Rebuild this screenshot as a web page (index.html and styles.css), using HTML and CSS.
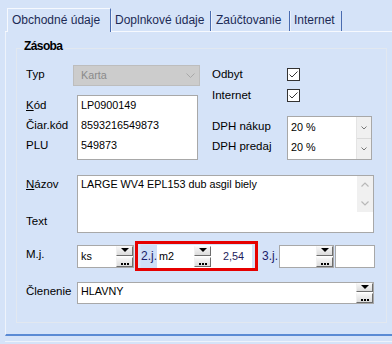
FILE: index.html
```html
<!DOCTYPE html>
<html lang="sk">
<head>
<meta charset="utf-8">
<link rel="stylesheet" href="styles.css">
</head>
<body>
<div class="tabs">
  <div class="tab tab-1 active">Obchodné údaje</div>
  <div class="tab tab-2">Doplnkové údaje</div>
  <div class="tab tab-3">Zaúčtovanie</div>
  <div class="tab tab-4">Internet</div>
</div>
<div class="panel">
  <fieldset class="group">
    <legend>Zásoba</legend>
    <div class="top">
      <div class="col-l">
        <div class="typ-row">
          <span class="lbl typ-lbl">Typ</span>
          <div class="sel-dis"><span>Karta</span><svg class="chev-dis" width="9" height="5" viewBox="0 0 9 5"><polyline points="0.5,0.5 4.5,4.5 8.5,0.5"/></svg></div>
        </div>
        <div class="codes">
          <div class="lbl code-lbls"><div><u>K</u>ód</div><div>Čiar.kód</div><div>PLU</div></div>
          <div class="field code-box"><div class="code-lines"><div>LP0900149</div><div>8593216549873</div><div>549873</div></div></div>
        </div>
      </div>
      <div class="col-r">
        <div class="chk-row r1"><span class="lbl chk-lbl">Odbyt</span><span class="chk"><svg width="11" height="11" viewBox="0 0 11 11"><polyline points="1.5,5.5 4,8 9.5,2.5"/></svg></span></div>
        <div class="chk-row r2"><span class="lbl chk-lbl">Internet</span><span class="chk"><svg width="11" height="11" viewBox="0 0 11 11"><polyline points="1.5,5.5 4,8 9.5,2.5"/></svg></span></div>
        <div class="dph">
          <div class="lbl dph-lbls"><div>DPH nákup</div><div>DPH predaj</div></div>
          <div class="field dph-combo">
            <div class="dph-vals"><div>20 %</div><div>20 %</div></div>
            <div class="dph-btns">
              <div class="dbtn"><svg width="6" height="4" viewBox="0 0 6 4"><polyline points="0.5,0.5 3,3 5.5,0.5"/></svg></div>
              <div class="dbtn dbtn-2"><svg width="6" height="4" viewBox="0 0 6 4"><polyline points="0.5,0.5 3,3 5.5,0.5"/></svg></div>
            </div>
          </div>
        </div>
      </div>
    </div>
    <div class="name-row">
      <div class="lbl name-lbls"><div><u>N</u>ázov</div><div class="text-lbl">Text</div></div>
      <div class="field name-box">
        <div class="name-text">LARGE WV4 EPL153 dub asgil biely</div>
        <div class="scroll"><svg width="16" height="36" viewBox="0 0 16 36"><polyline points="4.5,10.5 8,7 11.5,10.5"/><polyline points="4.5,25.5 8,29 11.5,25.5"/></svg></div>
      </div>
    </div>
    <div class="mj-row">
      <span class="lbl mj-lbl">M.j.</span>
      <div class="field cb cb-ks">
        <span class="cb-text">ks</span>
        <div class="stack">
          <div class="btn btn-drop"><svg width="8" height="4" viewBox="0 0 8 4"><polygon points="0,0 8,0 4,4"/></svg></div>
          <div class="btn btn-dots"><svg width="8" height="2" viewBox="0 0 8 2"><rect x="0" y="0" width="2" height="2"/><rect x="3" y="0" width="2" height="2"/><rect x="6" y="0" width="2" height="2"/></svg></div>
        </div>
      </div>
      <div class="mark">
        <span class="jlbl">2.j.</span>
        <div class="cb cb-m2">
          <span class="cb-text">m2</span>
          <div class="stack">
            <div class="btn btn-drop"><svg width="8" height="4" viewBox="0 0 8 4"><polygon points="0,0 8,0 4,4"/></svg></div>
            <div class="btn btn-dots"><svg width="8" height="2" viewBox="0 0 8 2"><rect x="0" y="0" width="2" height="2"/><rect x="3" y="0" width="2" height="2"/><rect x="6" y="0" width="2" height="2"/></svg></div>
          </div>
        </div>
        <span class="val val-2">2,54</span>
      </div>
      <span class="jlbl jlbl-3">3.j.</span>
      <div class="field cb cb-3">
        <span class="cb-text"></span>
        <div class="stack">
          <div class="btn btn-drop"><svg width="8" height="4" viewBox="0 0 8 4"><polygon points="0,0 8,0 4,4"/></svg></div>
          <div class="btn btn-dots"><svg width="8" height="2" viewBox="0 0 8 2"><rect x="0" y="0" width="2" height="2"/><rect x="3" y="0" width="2" height="2"/><rect x="6" y="0" width="2" height="2"/></svg></div>
        </div>
      </div>
      <span class="field val val-3"></span>
    </div>
    <div class="cl-row">
      <span class="lbl cl-lbl">Členenie</span>
      <div class="field cl-field">
        <span class="cl-text">HLAVNY</span>
        <div class="stack stack-cl">
          <div class="btn btn-drop"><svg width="8" height="4" viewBox="0 0 8 4"><polygon points="0,0 8,0 4,4"/></svg></div>
          <div class="btn btn-dots"><svg width="8" height="2" viewBox="0 0 8 2"><rect x="0" y="0" width="2" height="2"/><rect x="3" y="0" width="2" height="2"/><rect x="6" y="0" width="2" height="2"/></svg></div>
        </div>
      </div>
    </div>
  </fieldset>
</div>
<div class="foot"></div>
</body>
</html>
```

FILE: styles.css
```css
* { box-sizing: border-box; }
html, body { margin: 0; padding: 0; }
body {
  width: 392px;
  height: 344px;
  overflow: hidden;
  background: #d5e3f8;
  font-family: "Liberation Sans", Arial, sans-serif;
  font-size: 12px;
  color: #000;
}

/* tabs */
.tabs {
  display: flex;
  align-items: flex-end;
  height: 32px;
  margin-left: 5px;
  padding-left: 2px;
  border-bottom: 1px solid #f6f9fe;
}
.tab {
  flex: none;
  height: 20px;
  padding-left: 4px;
  border-left: 1px solid #eaf0fa;
  border-right: 1px solid #4a6cb0;
  color: #1c2a55;
  font-size: 12px;
  line-height: 18px;
  white-space: nowrap;
}
.tab.active {
  height: 24px;
  margin-bottom: -1px;
  padding-top: 2px;
  border-top: 1px solid #f6f9fe;
  border-left-color: #f6f9fe;
  background: #d5e3f8;
}
.tab-1 { width: 104px; }
.tab-2 { width: 100px; padding-left: 3px; }
.tab-3 { width: 79px; }
.tab-4 { width: 52px; padding-left: 3px; }

/* panel */
.panel {
  margin-left: 5px;
  padding: 6px 5px 11px 10px;
  border-left: 1px solid #eef3fb;
  border-bottom: 2px solid #5a8ad4;
}
.group {
  margin: 0;
  min-width: 0;
  padding: 0 11px 18px 9px;
  border: 1px solid #e2e8f0;
}
.group legend {
  margin-left: -4px;
  padding: 0 3px 5px 2px;
  font-weight: bold;
  font-size: 12px;
  line-height: 16px;
  letter-spacing: -0.6px;
}

.lbl { font-size: 11.5px; }
.field {
  background: #fff;
  border: 1px solid #a8a8a8;
  font-size: 10.8px;
}

/* top area */
.top { display: flex; }
.col-l { width: 174px; padding-top: 6px; }
.typ-row { display: flex; height: 21px; }
.typ-lbl { width: 47px; line-height: 19px; }
.sel-dis {
  display: flex;
  align-items: flex-start;
  justify-content: space-between;
  width: 127px;
  height: 21px;
  padding: 0 4px 0 7px;
  background: #cccccc;
  border: 1px solid #bdbdbd;
  color: #8a8a8a;
  font-size: 10.8px;
  line-height: 18px;
}
.chev-dis { margin-top: 7px; fill: none; stroke: #a8a8a8; stroke-width: 1; }

.codes { display: flex; margin-top: 9px; }
.code-lbls { width: 51px; line-height: 20px; }
.code-box { width: 121px; height: 65px; padding-left: 3px; line-height: 20px; }
.code-lines { margin-top: -1px; }

.col-r { flex: 1; padding: 5px 0 0 12px; }
.chk-row { display: flex; align-items: center; height: 21px; }
.chk-row.r2 { height: 20px; }
.chk-row.r1 .chk-lbl { line-height: 21px; }
.chk-row.r2 .chk-lbl { line-height: 20px; }
.chk-lbl { width: 75px; }
.chk {
  display: flex;
  width: 13px;
  height: 13px;
  background: #fff;
  border: 1px solid #333;
}
.chk svg { fill: none; stroke: #333; stroke-width: 1; }

.dph { display: flex; margin-top: 11px; }
.dph-lbls { width: 75px; line-height: 20px; }
.dph-combo { display: flex; width: 85px; height: 44px; }
.dph-vals { flex: 1; padding-left: 3px; line-height: 20px; }
.dph-btns {
  display: flex;
  flex-direction: column;
  width: 15px;
  background: #f0f0f0;
  border-left: 1px solid #e4e4e4;
}
.dbtn {
  display: flex;
  align-items: center;
  justify-content: center;
  height: 21px;
}
.dbtn-2 { border-top: 1px solid #dadada; }
.dbtn svg { fill: none; stroke: #777; stroke-width: 1; }

/* name */
.name-row { display: flex; margin-top: 15px; }
.name-lbls { width: 51px; padding-top: 1px; line-height: 16px; }
.text-lbl { margin-top: 21px; }
.name-box { display: flex; width: 297px; height: 58px; line-height: 16px; }
.name-text { flex: 1; padding-left: 3px; }
.scroll { width: 16px; height: 36px; background: #f0f0f0; }
.scroll svg { display: block; fill: none; stroke: #b8b8b8; stroke-width: 1.2; }

/* units row */
.mj-row { display: flex; align-items: flex-start; height: 30px; margin-top: 8px; }
.mj-lbl { width: 51px; line-height: 27px; }
.cb { display: flex; height: 23px; margin-top: 4px; }
.cb-text { flex: 1; padding-left: 3px; line-height: 21px; }
.cb-ks { width: 57px; }
.stack {
  display: flex;
  flex-direction: column;
  gap: 1px;
  width: 17px;
}
.btn {
  display: flex;
  justify-content: center;
  width: 17px;
  height: 10px;
  background: linear-gradient(#f6f6f6, #dcdcdc);
  border: 1px solid;
  border-color: #fafafa #6e6e6e #6e6e6e #f0f0f0;
}
.btn svg { display: block; fill: #000; }
.btn-drop { align-items: flex-start; padding-top: 1px; }
.btn-dots { align-items: flex-end; padding-bottom: 1px; }

.mark {
  display: flex;
  align-items: flex-start;
  height: 30px;
  margin-left: 1px;
  padding: 0 3px;
  border: 3px solid #e60000;
}
.jlbl {
  width: 16px;
  height: 23px;
  margin-top: 1px;
  color: #1c1c6a;
  font-size: 12px;
  line-height: 23px;
  white-space: nowrap;
}
.mark .jlbl { background: #cfdff7; }
.cb-m2 { width: 54px; margin-top: 1px; background: #fff; font-size: 10.8px; }
.cb-m2 .cb-text { padding-left: 2px; line-height: 23px; }
.cb-m2 .stack { padding-top: 1px; }
.cb-ks .stack, .cb-3 .stack { padding-top: 0; }
.val {
  display: block;
  height: 23px;
  margin-top: 1px;
  background: #fff;
  color: #1c1c5c;
  font-size: 10.8px;
  line-height: 23px;
  text-align: right;
}
.val-2 { width: 41px; padding-right: 8px; }
.jlbl-3 { margin-left: 4px; margin-top: 4px; }
.cb-3 { width: 55px; margin-left: 1px; }
.val-3 { width: 40px; margin-left: 1px; margin-top: 4px; }

/* clenenie */
.cl-row { display: flex; margin-top: 11px; }
.cl-lbl { width: 51px; line-height: 18px; }
.cl-field { display: flex; width: 297px; height: 22px; }
.cl-text { flex: 1; padding-left: 3px; line-height: 17px; }
.stack-cl .btn-drop { height: 9px; padding-top: 1px; }

.foot {
  height: 1px;
  margin: 5px 0 0 5px;
  background: #eef3fb;
}
```
